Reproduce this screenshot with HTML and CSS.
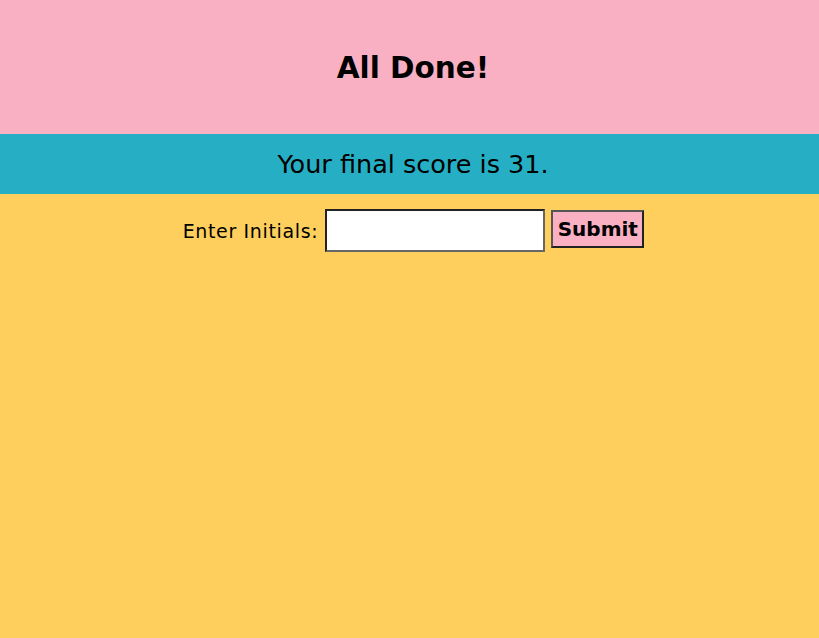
FILE: index.html
```html
<!DOCTYPE html>
<html>
<head>
<meta charset="utf-8">
<link rel="stylesheet" href="styles.css">
</head>
<body>
<header class="top">
  <h1 class="title">All Done!</h1>
</header>
<div class="score">Your final score is 31.</div>
<main class="content">
  <form class="form">
    <label class="label" for="initials">Enter Initials:</label>
    <input class="input" id="initials" type="text">
    <button class="submit" type="button">Submit</button>
  </form>
</main>
</body>
</html>
```
FILE: styles.css
```css
html, body {
  margin: 0;
  padding: 0;
  height: 100%;
}
body {
  font-family: "DejaVu Sans", Verdana, sans-serif;
  background: #fecf5c;
  color: #000;
  display: flex;
  flex-direction: column;
}
.top {
  background: #f9b0c3;
  height: 134px;
  display: flex;
  align-items: center;
  justify-content: center;
  padding-left: 7px;
  box-sizing: border-box;
}
.title {
  margin: 2px 0 0;
  font-size: 29.5px;
  font-weight: bold;
}
.score {
  background: #26afc4;
  height: 60px;
  display: flex;
  align-items: center;
  justify-content: center;
  font-size: 25.5px;
  padding-left: 7px;
  box-sizing: border-box;
}
.content {
  flex: 1;
  padding-top: 15px;
}
.form {
  display: flex;
  align-items: center;
  justify-content: center;
  gap: 6px;
  padding-left: 8px;
}
.label {
  font-size: 19px;
  letter-spacing: 0.65px;
}
.input {
  box-sizing: border-box;
  width: 220px;
  height: 43px;
  border: 2px solid;
  border-color: #222 #666 #666 #222;
  background: #fff;
  margin: 0 0 0 1px;
  font-size: 18px;
}
.submit {
  box-sizing: border-box;
  height: 38px;
  width: 93px;
  padding: 0;
  margin-top: -3px;
  background: #f9b0c3;
  border: 2px solid;
  border-color: #555 #222 #222 #555;
  font-family: "DejaVu Sans", Verdana, sans-serif;
  font-weight: bold;
  font-size: 20px;
  color: #000;
}
```
